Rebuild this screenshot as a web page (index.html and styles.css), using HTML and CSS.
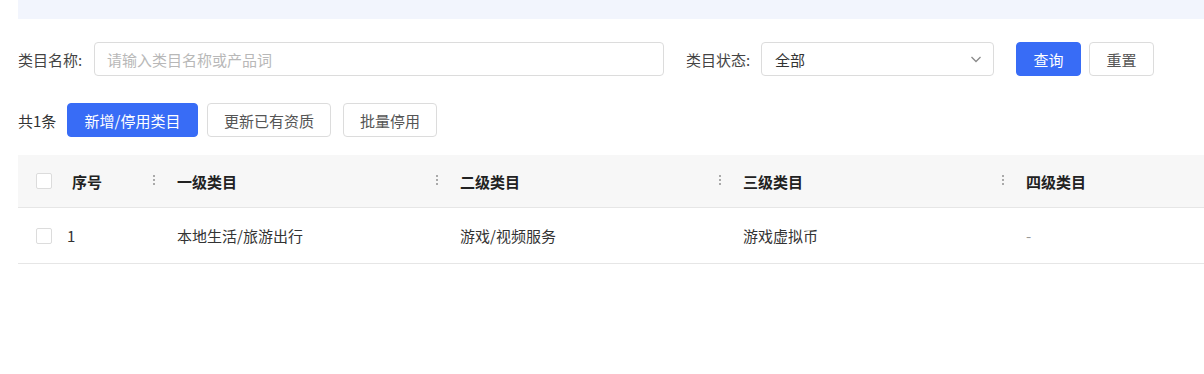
FILE: index.html
```html
<!DOCTYPE html>
<html lang="zh">
<head>
<meta charset="utf-8">
<link rel="stylesheet" href="styles.css">
</head>
<body>
<div class="page">
  <div class="banner"></div>
  <div class="filters">
    <label class="label">类目名称:</label>
    <div class="input">请输入类目名称或产品词</div>
    <label class="label label-status">类目状态:</label>
    <div class="select">
      <span>全部</span>
      <svg class="chev" width="14" height="14" viewBox="0 0 14 14"><path d="M2.5 5 L7 9.5 L11.5 5" fill="none" stroke="#8a8a8a" stroke-width="1.3"/></svg>
    </div>
    <button class="btn btn-primary btn-query">查询</button>
    <button class="btn btn-reset">重置</button>
  </div>
  <div class="actions">
    <span class="count">共1条</span>
    <button class="btn btn-primary btn-add">新增/停用类目</button>
    <button class="btn btn-update">更新已有资质</button>
    <button class="btn btn-batch">批量停用</button>
  </div>
  <div class="table">
    <div class="tr thead">
      <div class="td c-idx"><span class="cb"></span><span class="idx-h">序号</span><span class="dots"></span></div>
      <div class="td c-col"><span>一级类目</span><span class="dots"></span></div>
      <div class="td c-col"><span>二级类目</span><span class="dots"></span></div>
      <div class="td c-col"><span>三级类目</span><span class="dots"></span></div>
      <div class="td c-last"><span>四级类目</span></div>
    </div>
    <div class="tr tbody">
      <div class="td c-idx"><span class="cb"></span><span class="idx">1</span></div>
      <div class="td c-col">本地生活/旅游出行</div>
      <div class="td c-col">游戏/视频服务</div>
      <div class="td c-col">游戏虚拟币</div>
      <div class="td c-last dash">-</div>
    </div>
  </div>
</div>
</body>
</html>
```
FILE: styles.css
```css
html, body {
  margin: 0;
  padding: 0;
  background: #fff;
}
body {
  font-family: "Noto Sans CJK SC", "Microsoft YaHei", sans-serif;
  font-size: 15px;
  color: #333;
  overflow: hidden;
}
.page {
  padding-left: 18px;
}
.banner {
  height: 19px;
  background: #f2f5fd;
}
.filters {
  display: flex;
  align-items: center;
  margin-top: 23px;
  height: 34px;
}
.label {
  color: #444;
  width: 76px;
  white-space: nowrap;
}
.label-status {
  margin-left: 22px;
  width: 75px;
}
.input {
  box-sizing: border-box;
  width: 570px;
  height: 34px;
  border: 1px solid #dcdcdc;
  border-radius: 4px;
  padding-left: 12px;
  display: flex;
  align-items: center;
  color: #b8b8b8;
}
.select {
  box-sizing: border-box;
  width: 233px;
  height: 34px;
  border: 1px solid #dcdcdc;
  border-radius: 4px;
  padding: 0 10px 0 13px;
  display: flex;
  align-items: center;
  justify-content: space-between;
  color: #333;
}
.btn {
  box-sizing: border-box;
  height: 34px;
  border: 1px solid #dcdcdc;
  border-radius: 4px;
  background: #fff;
  color: #555;
  font-family: inherit;
  font-size: 15px;
  padding: 0;
  cursor: pointer;
}
.btn-primary {
  background: #386cf6;
  border-color: #386cf6;
  color: #fff;
}
.btn-query {
  margin-left: 22px;
  width: 65px;
}
.btn-reset {
  margin-left: 8px;
  width: 65px;
}
.actions {
  display: flex;
  align-items: center;
  margin-top: 27px;
}
.count {
  color: #333;
  width: 49px;
}
.btn-add {
  width: 131px;
}
.btn-update {
  width: 124px;
  margin-left: 9px;
}
.btn-batch {
  width: 94px;
  margin-left: 12px;
}
.table {
  margin-top: 18px;
  width: 1220px;
}
.tr {
  display: flex;
  align-items: center;
  border-bottom: 1px solid #e6e6e6;
}
.thead {
  height: 52px;
  background: #f7f7f7;
  font-weight: bold;
  color: #222;
}
.tbody {
  height: 55px;
}
.td {
  position: relative;
  box-sizing: border-box;
  display: flex;
  align-items: center;
  height: 100%;
}
.c-idx {
  width: 139px;
  padding-left: 18px;
}
.c-col {
  width: 283px;
  padding-left: 20px;
}
.c-last {
  flex: 1;
  padding-left: 20px;
}
.cb {
  box-sizing: border-box;
  width: 16px;
  height: 16px;
  border: 1px solid #dcdcdc;
  background: #fff;
  border-radius: 2px;
}
.idx-h {
  margin-left: 20px;
}
.idx {
  margin-left: 15px;
}
.dash {
  color: #999;
}
.dots {
  position: absolute;
  right: 2px;
  top: 19px;
  width: 2px;
  height: 12px;
  background: radial-gradient(circle, #aaa 0.9px, transparent 1.1px) 0 0 / 2px 4px repeat-y;
}
```
